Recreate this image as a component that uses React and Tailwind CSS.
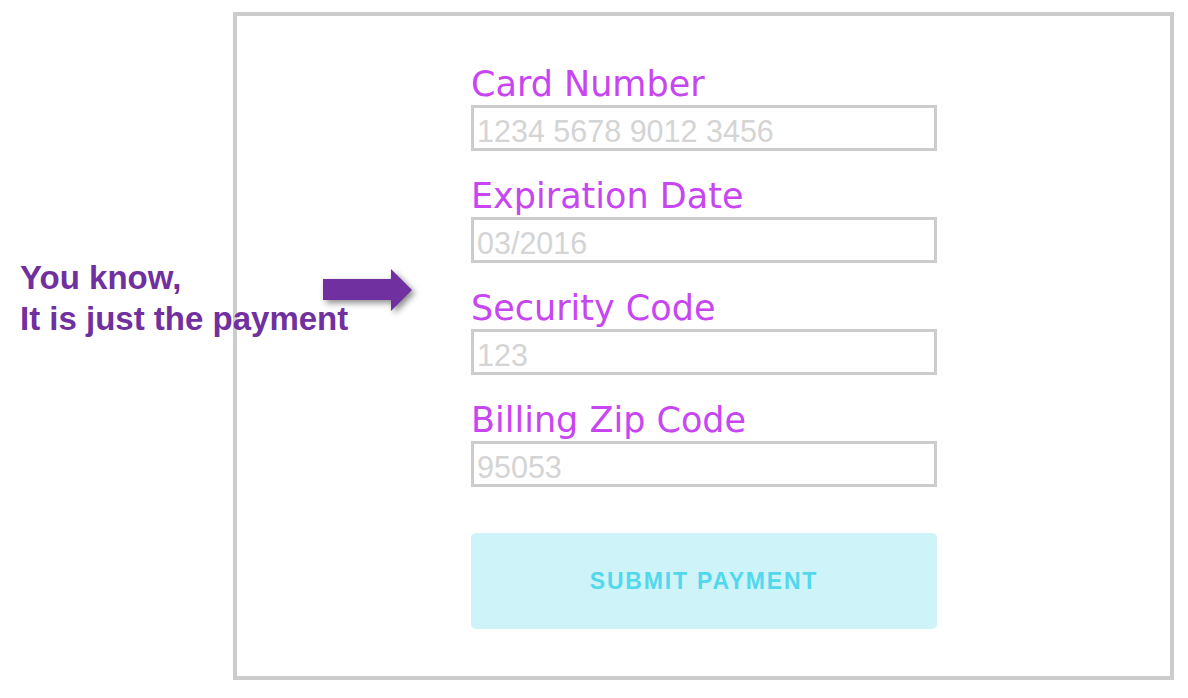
import React from 'react';

const fields = [
  { label: 'Card Number', placeholder: '1234 5678 9012 3456' },
  { label: 'Expiration Date', placeholder: '03/2016' },
  { label: 'Security Code', placeholder: '123' },
  { label: 'Billing Zip Code', placeholder: '95053' },
];

function Field({ label, placeholder }) {
  return (
    <div>
      <label className="block text-[35px] leading-[40px] text-[#c846f2] font-['DejaVu_Sans',sans-serif]">
        {label}
      </label>
      <input
        type="text"
        placeholder={placeholder}
        className="mt-px block w-[466px] h-[46px] border-[3px] border-[#cccccc] bg-white pl-[3px] pt-[7px] text-[30.5px] leading-[33px] font-['Liberation_Sans',Arial,sans-serif] text-[#333] placeholder:text-[#d4d4d4] outline-none"
      />
    </div>
  );
}

export default function App() {
  return (
    <div className="relative w-[1188px] h-[698px] bg-white overflow-hidden pt-[12px]">
      {/* payment form frame */}
      <div className="ml-[233px] w-[941px] h-[668px] border-4 border-[#cccccc] bg-white pt-[48px] pl-[234px]">
        <form className="w-[466px]" onSubmit={(e) => e.preventDefault()}>
          <div className="flex flex-col gap-[25px]">
            {fields.map((f) => (
              <Field key={f.label} label={f.label} placeholder={f.placeholder} />
            ))}
          </div>
          <button
            type="submit"
            className="mt-[46px] w-[466px] h-[96px] rounded-[5px] bg-[#cef3f9] text-[#52d8ec] text-[23px] font-bold tracking-[1.8px] font-['Liberation_Sans',Arial,sans-serif]"
          >
            SUBMIT PAYMENT
          </button>
        </form>
      </div>

      {/* annotation over the frame */}
      <div className="absolute left-[20px] top-[257px] text-[33px] leading-[41px] font-bold text-[#7030a0] font-['Liberation_Sans',Arial,sans-serif] whitespace-nowrap">
        <div>You know,</div>
        <div>It is just the payment</div>
      </div>
      <svg
        className="absolute left-[321px] top-[266px] drop-shadow-[3px_3px_3px_rgba(0,0,0,0.45)]"
        width="100"
        height="55"
        viewBox="0 0 100 55"
      >
        <path d="M2 13 H70 V3 L91 24 L70 45 V34 H2 Z" fill="#7030a0" />
      </svg>
    </div>
  );
}
